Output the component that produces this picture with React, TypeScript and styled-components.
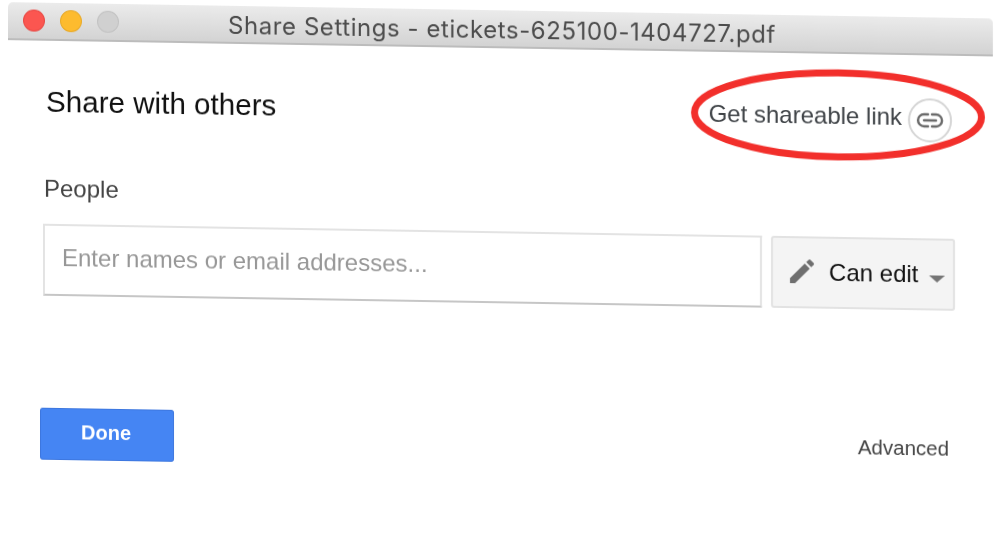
import React from "react";
import styled, { createGlobalStyle } from "styled-components";
import { MdEdit } from "react-icons/md";

const GlobalStyle = createGlobalStyle`
  html, body {
    margin: 0;
    padding: 0;
    background: #fff;
    overflow: hidden;
    font-family: "Liberation Sans", Arial, sans-serif;
  }
`;

// the whole capture leans slightly, so the window is sheared as one piece
const Page = styled.div`
  width: 1000px;
  height: 534px;
  padding-top: 2px;
  box-sizing: border-box;
  transform: skewY(0.95deg);
  transform-origin: 0 0;
  filter: blur(0.45px);
`;

const TitleBar = styled.div`
  position: relative;
  display: flex;
  align-items: center;
  justify-content: center;
  width: 985px;
  height: 38px;
  margin-left: 8px;
  box-sizing: border-box;
  background: linear-gradient(#ebebeb, #d3d3d3);
  border-bottom: 2px solid #bcbcbc;
  border-radius: 5px 5px 0 0;
`;

const Lights = styled.div`
  position: absolute;
  left: 15px;
  top: 7px;
  display: flex;
  gap: 15px;
`;

const Light = styled.span<{ $color: string; $edge: string }>`
  width: 22px;
  height: 22px;
  box-sizing: border-box;
  border-radius: 50%;
  background: ${(p) => p.$color};
  border: 1px solid ${(p) => p.$edge};
`;

const WindowTitle = styled.div`
  margin: 2px 0 0 3px;
  font-family: "Inter", "Liberation Sans", sans-serif;
  font-size: 24px;
  color: #4c4c4c;
  letter-spacing: 0.56px;
  white-space: nowrap;
`;

const Content = styled.div`
  display: flex;
  flex-direction: column;
  padding: 0 45px 0 43px;
`;

const HeaderRow = styled.div`
  display: flex;
  align-items: center;
  justify-content: space-between;
  height: 63px;
  margin-top: 29px;
`;

const Heading = styled.h1`
  margin: 0 0 0 3px;
  font-size: 29.6px;
  font-weight: 400;
  color: #111;
`;

const LinkGroup = styled.div`
  position: relative;
  display: flex;
  align-items: center;
  gap: 6px;
  margin: 3px 3px 0 0;
`;

const LinkText = styled.span`
  font-size: 24px;
  color: #3f4347;
`;

const LinkCircle = styled.span`
  display: flex;
  align-items: center;
  justify-content: center;
  width: 44px;
  height: 44px;
  margin-top: 6px;
  box-sizing: border-box;
  border: 2px solid #d5d5d5;
  border-radius: 50%;
  background: #fff;
`;

const Scribble = styled.svg`
  position: absolute;
  left: -19px;
  top: -23px;
  pointer-events: none;
`;

const FieldLabel = styled.div`
  margin: 43px 0 0 1px;
  font-size: 24px;
  line-height: 26px;
  color: #444;
`;

const ShareRow = styled.div`
  display: flex;
  align-items: stretch;
  gap: 9px;
  margin-top: 22px;
  height: 72px;
`;

const NameField = styled.div`
  display: flex;
  align-items: center;
  flex: 1;
  padding: 0 0 4px 17px;
  box-sizing: border-box;
  border: 2px solid #e3e3e3;
  border-bottom-color: #c6c6c6;
  font-size: 24px;
  color: #979797;
`;

const PermissionButton = styled.div`
  display: flex;
  align-items: center;
  width: 184px;
  padding-left: 13px;
  box-sizing: border-box;
  background: #f4f4f4;
  border: 2px solid #e2e2e2;
  border-radius: 3px;
  font-size: 24px;
  color: #111;
`;

const PencilIcon = styled(MdEdit)`
  width: 32px;
  height: 32px;
  margin: 0 11px 2px 0;
  color: #6f6f6f;
`;

const Caret = styled.span`
  width: 0;
  height: 0;
  margin: 8px 0 0 11px;
  border-left: 8px solid transparent;
  border-right: 8px solid transparent;
  border-top: 7px solid #757575;
`;

const FooterRow = styled.div`
  display: flex;
  align-items: center;
  justify-content: space-between;
  margin: 112px 0 0 -3px;
`;

const DoneButton = styled.button`
  width: 134px;
  height: 52px;
  padding: 0 2px 3px 0;
  background: #4585f3;
  border: 1px solid #3d77df;
  border-radius: 3px;
  color: #fff;
  font-family: "Liberation Sans", Arial, sans-serif;
  font-size: 20px;
  font-weight: 700;
`;

const AdvancedLink = styled.span`
  margin-right: 6px;
  font-size: 20.5px;
  color: #444;
`;

export default function App() {
  return (
    <Page>
      <GlobalStyle />
      <TitleBar>
        <Lights>
          <Light $color="#fb5650" $edge="#e94a45" />
          <Light $color="#fdbb2e" $edge="#e9ab2a" />
          <Light $color="#d0d0d0" $edge="#c3c3c3" />
        </Lights>
        <WindowTitle>Share Settings - etickets-625100-1404727.pdf</WindowTitle>
      </TitleBar>
      <Content>
        <HeaderRow>
          <Heading>Share with others</Heading>
          <LinkGroup>
            <LinkText>Get shareable link</LinkText>
            <LinkCircle>
              <svg width="28" height="16" viewBox="0 0 28 16" fill="none" stroke="#6a6a6a" strokeWidth="2.4" strokeLinecap="round">
                <path d="M12 2H8a6 6 0 0 0 0 12h4" />
                <path d="M16 2h4a6 6 0 0 1 0 12h-4" />
                <path d="M8 8h12" />
              </svg>
            </LinkCircle>
            <Scribble width="296" height="94" viewBox="0 0 296 94" fill="none">
              <ellipse cx="148" cy="47" rx="143.5" ry="42" stroke="#f22f2b" strokeWidth="7" />
            </Scribble>
          </LinkGroup>
        </HeaderRow>
        <FieldLabel>People</FieldLabel>
        <ShareRow>
          <NameField>Enter names or email addresses...</NameField>
          <PermissionButton>
            <PencilIcon />
            Can edit
            <Caret />
          </PermissionButton>
        </ShareRow>
        <FooterRow>
          <DoneButton>Done</DoneButton>
          <AdvancedLink>Advanced</AdvancedLink>
        </FooterRow>
      </Content>
    </Page>
  );
}
